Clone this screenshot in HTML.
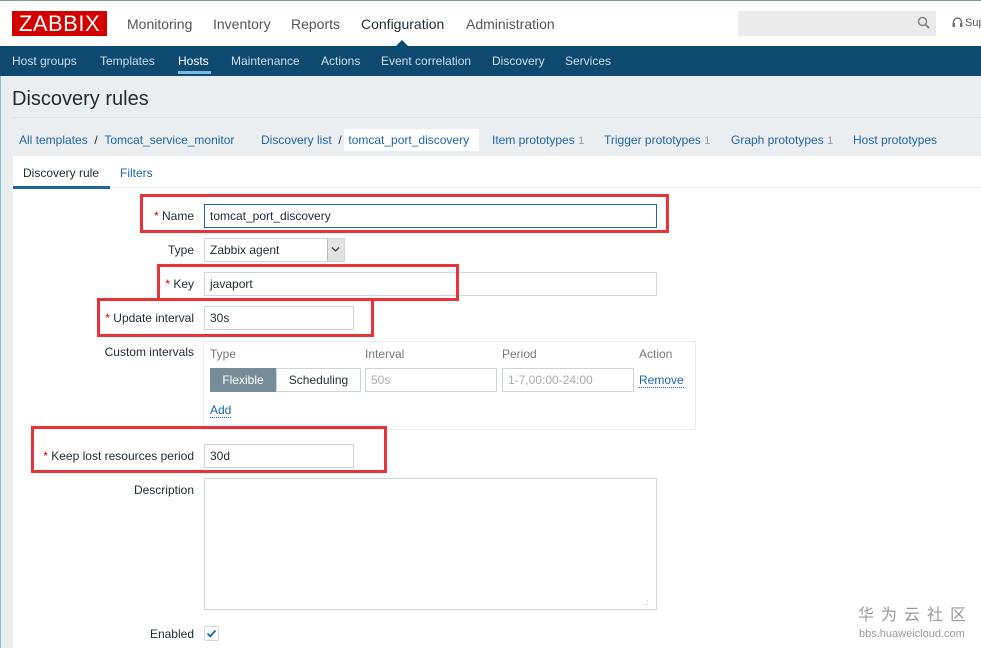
<!DOCTYPE html>
<html><head><meta charset="utf-8"><style>
*{margin:0;padding:0;box-sizing:border-box}
body{width:981px;height:648px;overflow:hidden;background:#ebeef0;font-family:"Liberation Sans",Arial,sans-serif;font-size:12px;color:#1f2c33;position:relative}
.a{position:absolute;white-space:nowrap}
.inp{position:absolute;background:#fff;border:1px solid #ccd5d9;height:24px;padding:0 5px;line-height:22px;font-size:12px;color:#1f2c33}
.lbl{position:absolute;text-align:right;width:190px;left:4px;font-size:12px;color:#1f2c33}
.req{color:#d40000}
.red{position:absolute;border:3px solid #e8333a}
.lnk{color:#1f65a6}
</style></head><body>
<div class="a" style="left:0;top:0;width:981px;height:46px;background:#fff;border-top:1px solid #7f9c8f"></div>
<div class="a" style="left:12px;top:11px;width:95px;height:25px;background:#d40000;color:#fff;font-size:22px;line-height:25px;text-align:center;letter-spacing:0.5px">ZABBIX</div>
<div class="a" style="left:127px;top:16px;font-size:14px;color:#555">Monitoring</div>
<div class="a" style="left:213px;top:16px;font-size:14px;color:#555">Inventory</div>
<div class="a" style="left:291px;top:16px;font-size:14px;color:#555">Reports</div>
<div class="a" style="left:361px;top:16px;font-size:14px;color:#1f2c33">Configuration</div>
<div class="a" style="left:466px;top:16px;font-size:14px;color:#555">Administration</div>
<div class="a" style="left:396px;top:40px;width:0;height:0;border-left:6px solid transparent;border-right:6px solid transparent;border-bottom:6px solid #0e4a6f"></div>
<div class="a" style="left:738px;top:11px;width:198px;height:25px;background:#ebebeb"></div>
<svg class="a" style="left:917px;top:16px" width="14" height="14" viewBox="0 0 14 14"><circle cx="5.5" cy="5.5" r="4" fill="none" stroke="#888" stroke-width="1.6"/><line x1="8.5" y1="8.5" x2="12" y2="12" stroke="#888" stroke-width="2"/></svg>
<svg class="a" style="left:952px;top:17px" width="11" height="11" viewBox="0 0 11 11"><path d="M1.5 7V5a4 4 0 0 1 8 0v2" fill="none" stroke="#777" stroke-width="1.5"/><rect x="0.5" y="6" width="2.5" height="4" fill="#777"/><rect x="8" y="6" width="2.5" height="4" fill="#777"/></svg>
<div class="a" style="left:965px;top:17px;font-size:11px;color:#555">Sup</div>
<div class="a" style="left:0;top:46px;width:981px;height:30px;background:#0e4a6f"></div>
<div class="a" style="left:12px;top:54px;color:#cfdde6">Host groups</div>
<div class="a" style="left:100px;top:54px;color:#cfdde6">Templates</div>
<div class="a" style="left:178px;top:54px;color:#fff">Hosts</div>
<div class="a" style="left:178px;top:71px;width:33px;height:3px;background:#7ab8e0"></div>
<div class="a" style="left:231px;top:54px;color:#cfdde6">Maintenance</div>
<div class="a" style="left:321px;top:54px;color:#cfdde6">Actions</div>
<div class="a" style="left:381px;top:54px;color:#cfdde6">Event correlation</div>
<div class="a" style="left:492px;top:54px;color:#cfdde6">Discovery</div>
<div class="a" style="left:565px;top:54px;color:#cfdde6">Services</div>
<div class="a" style="left:0;top:76px;width:1px;height:572px;background:#7cc4d2"></div>
<div class="a" style="left:12px;top:88px;font-size:20px;color:#1f2c33">Discovery rules</div>
<div class="a" style="left:13px;top:117px;width:968px;height:1px;background:#dde2e5"></div>
<div class="a" style="left:19px;top:133px" ><span class="lnk">All templates</span>&nbsp; / &nbsp;<span class="lnk">Tomcat_service_monitor</span></div>
<div class="a" style="left:344px;top:129px;width:135px;height:22px;background:#fff"></div>
<div class="a" style="left:261px;top:133px"><span class="lnk">Discovery list</span>&nbsp; / &nbsp;<span class="lnk">tomcat_port_discovery</span></div>
<div class="a" style="left:492px;top:133px"><span class="lnk">Item prototypes</span> <span style="color:#999;font-size:11px">1</span></div>
<div class="a" style="left:604px;top:133px"><span class="lnk">Trigger prototypes</span> <span style="color:#999;font-size:11px">1</span></div>
<div class="a" style="left:731px;top:133px"><span class="lnk">Graph prototypes</span> <span style="color:#999;font-size:11px">1</span></div>
<div class="a" style="left:853px;top:133px"><span class="lnk">Host prototypes</span></div>
<div class="a" style="left:13px;top:156px;width:968px;height:492px;background:#fff"></div>
<div class="a" style="left:13px;top:187px;width:968px;height:1px;background:#ebeef0"></div>
<div class="a" style="left:23px;top:166px">Discovery rule</div>
<div class="a" style="left:13px;top:186px;width:97px;height:3px;background:#1f65a6"></div>
<div class="a lnk" style="left:120px;top:166px">Filters</div>

<div class="lbl" style="top:209px"><span class="req">*</span> Name</div>
<div class="inp" style="left:204px;top:204px;width:453px;border-color:#1f65a6">tomcat_port_discovery</div>
<div class="lbl" style="top:243px">Type</div>
<div class="inp" style="left:204px;top:238px;width:141px;padding-left:5px">Zabbix agent</div>
<div class="a" style="left:327px;top:239px;width:17px;height:22px;background:#e3e3e3;border-left:1px solid #bbb"></div>
<svg class="a" style="left:331px;top:246px" width="9" height="7" viewBox="0 0 9 7"><path d="M1 1.5L4.5 5 8 1.5" fill="none" stroke="#444" stroke-width="1.3"/></svg>
<div class="lbl" style="top:277px"><span class="req">*</span> Key</div>
<div class="inp" style="left:204px;top:272px;width:453px">javaport</div>
<div class="lbl" style="top:311px"><span class="req">*</span> Update interval</div>
<div class="inp" style="left:204px;top:306px;width:150px">30s</div>
<div class="lbl" style="top:345px">Custom intervals</div>
<div class="a" style="left:203px;top:341px;width:493px;height:89px;border:1px solid #ebeef0"></div>
<div class="a" style="left:210px;top:347px;color:#777">Type</div>
<div class="a" style="left:365px;top:347px;color:#777">Interval</div>
<div class="a" style="left:502px;top:347px;color:#777">Period</div>
<div class="a" style="left:639px;top:347px;color:#777">Action</div>
<div class="a" style="left:210px;top:368px;width:66px;height:24px;background:#768d99;color:#fff;line-height:24px;text-align:center">Flexible</div>
<div class="a" style="left:276px;top:368px;width:85px;height:24px;border:1px solid #ccd5d9;line-height:22px;text-align:center">Scheduling</div>
<div class="inp" style="left:365px;top:368px;width:132px;color:#aaa">50s</div>
<div class="inp" style="left:502px;top:368px;width:132px;color:#aaa">1-7,00:00-24:00</div>
<div class="a lnk" style="left:639px;top:373px;border-bottom:1px dotted #1f65a6">Remove</div>
<div class="a lnk" style="left:210px;top:403px;border-bottom:1px dotted #1f65a6">Add</div>
<div class="lbl" style="top:449px"><span class="req">*</span> Keep lost resources period</div>
<div class="inp" style="left:204px;top:444px;width:150px">30d</div>
<div class="lbl" style="top:483px">Description</div>
<div class="a" style="left:204px;top:478px;width:453px;height:132px;border:1px solid #ccd5d9;background:#fff"></div>
<div class="a" style="left:644px;top:598px;font-size:8px;color:#aaa">.:</div>
<div class="lbl" style="top:627px">Enabled</div>
<div class="a" style="left:204px;top:626px;width:15px;height:15px;border:1px solid #ccd5d9;border-radius:2px"></div>
<svg class="a" style="left:206px;top:628px" width="11" height="11" viewBox="0 0 11 11"><path d="M1.5 5.5L4.3 8.3 9.5 2.5" fill="none" stroke="#1f65a6" stroke-width="1.8"/></svg>

<div class="red" style="left:140px;top:194px;width:529px;height:39px"></div>
<div class="red" style="left:157px;top:264px;width:302px;height:37px"></div>
<div class="red" style="left:97px;top:298px;width:277px;height:39px"></div>
<div class="red" style="left:31px;top:426px;width:356px;height:47px"></div>

<div class="a" style="left:858px;top:603px;font-size:16px;line-height:20px;color:#999;letter-spacing:7px;font-family:'Noto Sans CJK SC',sans-serif">华为云社区</div>
<div class="a" style="left:859px;top:628px;font-size:11px;color:#999">bbs.huaweicloud.com</div>
</body></html>
